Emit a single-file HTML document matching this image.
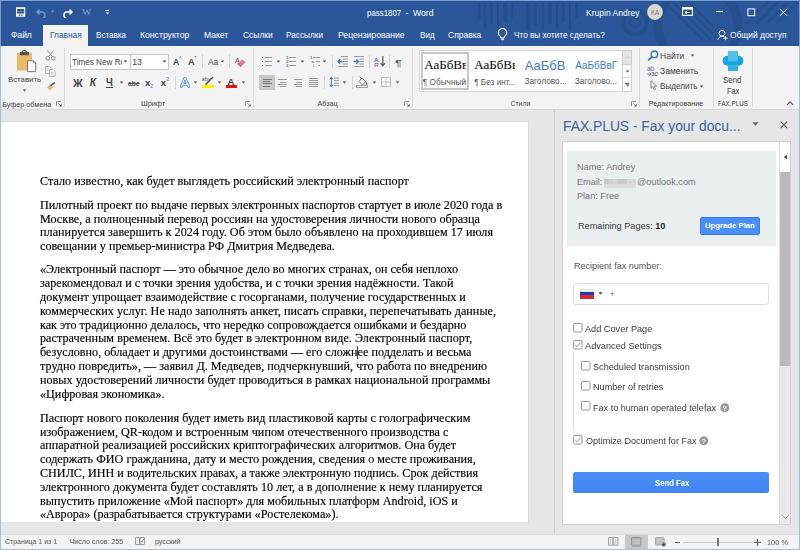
<!DOCTYPE html><html><head><meta charset="utf-8"><style>
html,body{margin:0;padding:0;width:800px;height:550px;overflow:hidden;position:relative;}
.t{position:absolute;white-space:nowrap;line-height:1em;}
.r{position:absolute;}
</style></head><body>
<div class="r" style="left:0px;top:0px;width:800px;height:550px;background:#e6e6e6;"></div>
<div class="r" style="left:0px;top:0px;width:800px;height:46px;background:#2b579a;"></div>
<svg class="r" style="left:470px;top:0px;" width="330" height="46" viewBox="0 0 330 46">
<defs><clipPath id="tb"><rect x="0" y="0" width="330" height="46"/></clipPath></defs>
<g clip-path="url(#tb)">
<g fill="#26508d">
<rect x="8" y="0" width="3" height="20"/><rect x="14" y="0" width="2" height="28"/><rect x="20" y="0" width="3" height="24"/>
<rect x="27" y="0" width="2" height="30"/><rect x="33" y="0" width="4" height="22"/><rect x="41" y="0" width="2" height="18"/>
<rect x="56" y="0" width="4" height="30"/><rect x="64" y="0" width="3" height="26"/><rect x="72" y="0" width="2" height="30"/>
<rect x="78" y="0" width="4" height="24"/><rect x="86" y="0" width="2" height="28"/><rect x="92" y="0" width="3" height="22"/>
<rect x="99" y="0" width="2" height="30"/><rect x="105" y="0" width="3" height="18"/>
</g>
<g fill="none" stroke="#26508d">
<circle cx="165" cy="22.5" r="4.8" stroke-width="2.6"/><circle cx="165" cy="22.5" r="11.8" stroke-width="4.4"/>
<circle cx="228" cy="26" r="40" stroke-width="9"/>
<path d="M193 0 L233 40 M201 0 L241 40 M209 0 L249 40 M217 0 L254 37" stroke-width="2.2"/>
<path d="M276 24 L300 0 M286 24 L310 0 M296 24 L320 0 M306 24 L330 0" stroke-width="3"/>
</g></g></svg>
<div class="r" style="left:0px;top:0px;width:800px;height:1px;background:#7f9ecb;"></div>
<div class="r" style="left:0px;top:0px;width:1px;height:46px;background:#7f9ecb;"></div>
<div class="r" style="left:799px;top:0px;width:1px;height:46px;background:#7f9ecb;"></div>
<div class="r" style="left:1px;top:1px;width:798px;height:1px;background:#25509a;"></div>
<div class="r" style="left:0px;top:46px;width:1px;height:504px;background:#a9bdd9;"></div>
<div class="r" style="left:799px;top:46px;width:1px;height:504px;background:#a9bdd9;"></div>
<div class="r" style="left:0px;top:549px;width:800px;height:1px;background:#a9bdd9;"></div>
<svg class="r" style="left:15px;top:7px;" width="11" height="11" viewBox="0 0 11 11"><rect x="1" y="0.25" width="9.25" height="9.5" fill="#fff"/><rect x="2.1" y="2" width="7.05" height="4.6" fill="#2b579a"/><rect x="2.1" y="4.1" width="7.05" height="0.6" fill="#8aa6d0"/><rect x="3.8" y="7.5" width="1.4" height="1.4" fill="#2b579a"/><rect x="6.2" y="7.5" width="1.4" height="1.4" fill="#2b579a"/></svg>
<svg class="r" style="left:36px;top:8px;" width="12" height="10" viewBox="0 0 12 10"><path d="M3.5 1.5 L1 4 L3.5 6.5" fill="none" stroke="#7f9cc8" stroke-width="1.3"/><path d="M1.5 4 H7 A3.2 3.2 0 0 1 7 10" fill="none" stroke="#7f9cc8" stroke-width="1.3"/></svg>
<svg class="r" style="left:50.0px;top:9.5px;" width="5" height="3" viewBox="0 0 5 3"><path d="M0.6 0.4 L4.4 0.4 L2.5 2.5 Z" fill="#7f9cc8"/></svg>
<svg class="r" style="left:61px;top:8px;" width="12" height="10" viewBox="0 0 12 10"><path d="M8.5 1.5 L11 4 L8.5 6.5" fill="none" stroke="#fff" stroke-width="1.5"/><path d="M10.5 4 H5 A3.2 3.2 0 0 0 5 10" fill="none" stroke="#fff" stroke-width="1.5"/></svg>
<div class="t" style="left:82.30px;top:8.06px;font-size:9.0px;color:#8ea8d0;font-weight:normal;font-family:'Liberation Serif', serif;transform:scaleX(1.1294);transform-origin:0 0;">W</div>
<div class="r" style="left:105px;top:10px;width:4px;height:1px;background:#fff;"></div>
<svg class="r" style="left:104.5px;top:11.5px;" width="5" height="3" viewBox="0 0 5 3"><path d="M0.6 0.4 L4.4 0.4 L2.5 2.6 Z" fill="#fff"/></svg>
<div class="t" style="left:366.60px;top:8.63px;font-size:9.3px;color:#ffffff;font-weight:normal;font-family:'Liberation Sans', sans-serif;transform:scaleX(0.8480);transform-origin:0 0;">pass1807</div>
<div class="t" style="left:405.60px;top:8.63px;font-size:9.3px;color:#ffffff;font-weight:normal;font-family:'Liberation Sans', sans-serif;">-</div>
<div class="t" style="left:412.60px;top:8.63px;font-size:9.3px;color:#ffffff;font-weight:normal;font-family:'Liberation Sans', sans-serif;transform:scaleX(0.9344);transform-origin:0 0;">Word</div>
<div class="t" style="left:586.20px;top:8.68px;font-size:9.0px;color:#ffffff;font-weight:normal;font-family:'Liberation Sans', sans-serif;transform:scaleX(0.9461);transform-origin:0 0;">Krupin Andrey</div>
<svg class="r" style="left:646px;top:2px;" width="18" height="19" viewBox="0 0 18 19"><circle cx="9" cy="10" r="7.9" fill="#dad6d2"/></svg>
<div class="t" style="left:650.80px;top:9.68px;font-size:6.4px;color:#7d746e;font-weight:normal;font-family:'Liberation Sans', sans-serif;transform:scaleX(0.9612);transform-origin:0 0;">KA</div>
<svg class="r" style="left:682px;top:7px;" width="11" height="9" viewBox="0 0 11 9"><rect x="0.6" y="0.6" width="9.8" height="7.8" fill="none" stroke="#fff" stroke-width="1.1"/><rect x="0.6" y="0.6" width="9.8" height="2" fill="#fff"/><path d="M3 5.5 H7.5 M5 4 L3 5.5 L5 7" fill="none" stroke="#fff" stroke-width="1"/></svg>
<div class="r" style="left:715.6px;top:11px;width:7.5px;height:1px;background:#fff;"></div>
<svg class="r" style="left:747px;top:7.5px;" width="9" height="9" viewBox="0 0 9 9"><rect x="0.9" y="0.9" width="6.8" height="6.8" fill="none" stroke="#fff" stroke-width="1"/></svg>
<svg class="r" style="left:779px;top:7.5px;" width="9" height="9" viewBox="0 0 9 9"><path d="M1 0.8 L8 7.8 M8 0.8 L1 7.8" stroke="#fff" stroke-width="1"/></svg>
<div class="r" style="left:43px;top:25px;width:45px;height:21px;background:#f3f3f3;"></div>
<div class="t" style="left:10.85px;top:31.35px;font-size:8.8px;color:#fff;font-weight:normal;font-family:'Liberation Sans', sans-serif;transform:scaleX(0.9612);transform-origin:0 0;">Файл</div>
<div class="t" style="left:49.60px;top:31.35px;font-size:8.8px;color:#2b579a;font-weight:normal;font-family:'Liberation Sans', sans-serif;transform:scaleX(0.9467);transform-origin:0 0;">Главная</div>
<div class="t" style="left:95.85px;top:31.35px;font-size:8.8px;color:#fff;font-weight:normal;font-family:'Liberation Sans', sans-serif;transform:scaleX(0.9189);transform-origin:0 0;">Вставка</div>
<div class="t" style="left:140.35px;top:31.35px;font-size:8.8px;color:#fff;font-weight:normal;font-family:'Liberation Sans', sans-serif;transform:scaleX(0.9826);transform-origin:0 0;">Конструктор</div>
<div class="t" style="left:204.10px;top:31.35px;font-size:8.8px;color:#fff;font-weight:normal;font-family:'Liberation Sans', sans-serif;transform:scaleX(0.9757);transform-origin:0 0;">Макет</div>
<div class="t" style="left:242.60px;top:31.35px;font-size:8.8px;color:#fff;font-weight:normal;font-family:'Liberation Sans', sans-serif;transform:scaleX(0.9618);transform-origin:0 0;">Ссылки</div>
<div class="t" style="left:286.35px;top:31.35px;font-size:8.8px;color:#fff;font-weight:normal;font-family:'Liberation Sans', sans-serif;transform:scaleX(0.9383);transform-origin:0 0;">Рассылки</div>
<div class="t" style="left:338.10px;top:31.35px;font-size:8.8px;color:#fff;font-weight:normal;font-family:'Liberation Sans', sans-serif;transform:scaleX(0.9803);transform-origin:0 0;">Рецензирование</div>
<div class="t" style="left:419.70px;top:31.35px;font-size:8.8px;color:#fff;font-weight:normal;font-family:'Liberation Sans', sans-serif;transform:scaleX(0.9170);transform-origin:0 0;">Вид</div>
<div class="t" style="left:448.35px;top:31.35px;font-size:8.8px;color:#fff;font-weight:normal;font-family:'Liberation Sans', sans-serif;transform:scaleX(0.9648);transform-origin:0 0;">Справка</div>
<div class="t" style="left:514.10px;top:31.35px;font-size:8.8px;color:#fff;font-weight:normal;font-family:'Liberation Sans', sans-serif;transform:scaleX(0.9337);transform-origin:0 0;">Что вы хотите сделать?</div>
<div class="t" style="left:729.60px;top:31.35px;font-size:8.8px;color:#fff;font-weight:normal;font-family:'Liberation Sans', sans-serif;transform:scaleX(0.9567);transform-origin:0 0;">Общий доступ</div>
<svg class="r" style="left:497px;top:28px;" width="11" height="14" viewBox="0 0 11 14"><path d="M3.1 8.1 A4.2 4.2 0 1 1 7.9 8.1 L6.9 10 H4.1 Z" fill="none" stroke="#fff" stroke-width="1.1" stroke-linejoin="round"/><path d="M4.2 10.6 H6.8 V11.6 L5.5 12.6 L4.2 11.6 Z" fill="#fff"/></svg>
<svg class="r" style="left:717px;top:29px;" width="13" height="13" viewBox="0 0 13 13"><circle cx="5" cy="4.2" r="2.9" fill="none" stroke="#fff" stroke-width="1"/><path d="M0.8 10.8 A4.6 4.6 0 0 1 7.2 7.6" fill="none" stroke="#fff" stroke-width="1"/><path d="M8.5 7 V11.2 M6.4 9.1 H10.6" stroke="#fff" stroke-width="1"/></svg>
<div class="r" style="left:0px;top:46px;width:800px;height:63px;background:#f3f3f3;"></div>
<div class="r" style="left:0px;top:109px;width:800px;height:1px;background:#d6d6d6;"></div>
<div class="r" style="left:0px;top:46px;width:1px;height:63px;background:#a9bdd9;"></div>
<div class="r" style="left:799px;top:46px;width:1px;height:63px;background:#a9bdd9;"></div>
<div class="r" style="left:64px;top:48px;width:1px;height:59px;background:#dadada;"></div>
<div class="r" style="left:253px;top:48px;width:1px;height:59px;background:#dadada;"></div>
<div class="r" style="left:412px;top:48px;width:1px;height:59px;background:#dadada;"></div>
<div class="r" style="left:639px;top:48px;width:1px;height:59px;background:#dadada;"></div>
<div class="r" style="left:713px;top:48px;width:1px;height:59px;background:#dadada;"></div>
<div class="r" style="left:752px;top:48px;width:1px;height:59px;background:#dadada;"></div>
<div class="t" style="left:2.30px;top:100.51px;font-size:7.2px;color:#444;font-weight:normal;font-family:'Liberation Sans', sans-serif;">Буфер обмена</div>
<div class="t" style="left:141.00px;top:100.42px;font-size:7.3px;color:#444;font-weight:normal;font-family:'Liberation Sans', sans-serif;">Шрифт</div>
<div class="t" style="left:317.60px;top:100.56px;font-size:7.13px;color:#444;font-weight:normal;font-family:'Liberation Sans', sans-serif;">Абзац</div>
<div class="t" style="left:510.60px;top:100.84px;font-size:6.8px;color:#444;font-weight:normal;font-family:'Liberation Sans', sans-serif;">Стили</div>
<div class="t" style="left:648.70px;top:100.53px;font-size:7.17px;color:#444;font-weight:normal;font-family:'Liberation Sans', sans-serif;">Редактирование</div>
<div class="t" style="left:717.60px;top:100.34px;font-size:7.4px;color:#444;font-weight:normal;font-family:'Liberation Sans', sans-serif;transform:scaleX(0.8435);transform-origin:0 0;">FAX.PLUS</div>
<svg class="r" style="left:55.7px;top:101px;" width="6" height="5.5" viewBox="0 0 6 5.5"><path d="M0.5 5 V0.5 H5" fill="none" stroke="#8a8a8a" stroke-width="0.9"/><path d="M2.2 2.2 L4 4" stroke="#888" stroke-width="0.7"/><path d="M5.6 2.8 V5.4 H3 Z" fill="#555"/></svg>
<svg class="r" style="left:244.8px;top:101px;" width="6" height="5.5" viewBox="0 0 6 5.5"><path d="M0.5 5 V0.5 H5" fill="none" stroke="#8a8a8a" stroke-width="0.9"/><path d="M2.2 2.2 L4 4" stroke="#888" stroke-width="0.7"/><path d="M5.6 2.8 V5.4 H3 Z" fill="#555"/></svg>
<svg class="r" style="left:403.9px;top:101px;" width="6" height="5.5" viewBox="0 0 6 5.5"><path d="M0.5 5 V0.5 H5" fill="none" stroke="#8a8a8a" stroke-width="0.9"/><path d="M2.2 2.2 L4 4" stroke="#888" stroke-width="0.7"/><path d="M5.6 2.8 V5.4 H3 Z" fill="#555"/></svg>
<svg class="r" style="left:631px;top:101px;" width="6" height="5.5" viewBox="0 0 6 5.5"><path d="M0.5 5 V0.5 H5" fill="none" stroke="#8a8a8a" stroke-width="0.9"/><path d="M2.2 2.2 L4 4" stroke="#888" stroke-width="0.7"/><path d="M5.6 2.8 V5.4 H3 Z" fill="#555"/></svg>
<svg class="r" style="left:786px;top:100px;" width="8" height="6" viewBox="0 0 8 6"><path d="M1 4.8 L4 1.8 L7 4.8" fill="none" stroke="#555" stroke-width="1.1"/></svg>
<svg class="r" style="left:16px;top:50px;" width="21" height="23" viewBox="0 0 21 23"><rect x="1" y="3" width="15" height="17.5" fill="#eab96a"/>
<rect x="3.8" y="1.8" width="9.2" height="3.5" rx="1" fill="#555"/><rect x="6.5" y="0.5" width="3.8" height="2.5" rx="1" fill="none" stroke="#555" stroke-width="1"/>
<path d="M11.5 10.8 H17.5 L19.7 13 V21.6 H11.5 Z" fill="#fff" stroke="#777" stroke-width="1"/><path d="M17.5 10.8 V13 H19.7" fill="none" stroke="#777" stroke-width="0.8"/></svg>
<div class="t" style="left:7.90px;top:75.95px;font-size:7.86px;color:#444;font-weight:normal;font-family:'Liberation Sans', sans-serif;">Вставить</div>
<svg class="r" style="left:21.9px;top:88.5px;" width="5" height="3" viewBox="0 0 5 3"><path d="M0.6 0.4 L4.4 0.4 L2.5 2.5 Z" fill="#555"/></svg>
<svg class="r" style="left:45px;top:50px;" width="11" height="11" viewBox="0 0 11 11"><circle cx="2.8" cy="8.2" r="1.9" fill="none" stroke="#8a8a8a" stroke-width="0.9"/><circle cx="8.2" cy="8.2" r="1.9" fill="none" stroke="#8a8a8a" stroke-width="0.9"/><path d="M3.8 6.6 L8.5 0.5 M7.2 6.6 L2.5 0.5" stroke="#8a8a8a" stroke-width="0.9"/></svg>
<svg class="r" style="left:45px;top:66px;" width="11" height="11" viewBox="0 0 11 11"><path d="M0.5 0.5 H4.5 L6 2 V7.5 H0.5 Z" fill="#f6f6f6" stroke="#aaa" stroke-width="0.9"/><path d="M4.5 3.5 H8.5 L10 5 V10.5 H4.5 Z" fill="#f6f6f6" stroke="#aaa" stroke-width="0.9"/><path d="M1.8 3 H4 M1.8 4.6 H4 M5.8 6.5 H8.5 M5.8 8 H8.5" stroke="#bbb" stroke-width="0.6"/></svg>
<svg class="r" style="left:46px;top:82px;" width="10" height="9" viewBox="0 0 10 9"><path d="M0.8 5.5 L4 2.5 L7 5.5 L4 8.6 Z" fill="#eab96a"/><path d="M4.5 3.8 L8.8 0.6" stroke="#555" stroke-width="1.6"/></svg>
<div class="r" style="left:70px;top:53.5px;width:61px;height:16px;background:#fff;box-sizing:border-box;border:1px solid #c6c6c6;"></div>
<div class="r" style="left:130px;top:53.5px;width:39px;height:16px;background:#fff;box-sizing:border-box;border:1px solid #c6c6c6;"></div>
<div class="t" style="left:72.30px;top:58.25px;font-size:8.8px;color:#444;font-weight:normal;font-family:'Liberation Sans', sans-serif;transform:scaleX(0.9252);transform-origin:0 0;"><span style="display:inline-block;width:53.5px;overflow:hidden;vertical-align:top">Times New Roman</span></div>
<svg class="r" style="left:123.1px;top:60.3px;" width="5" height="3" viewBox="0 0 5 3"><path d="M0.6 0.4 L4.4 0.4 L2.5 2.5 Z" fill="#444"/></svg>
<div class="t" style="left:132.20px;top:58.25px;font-size:8.8px;color:#444;font-weight:normal;font-family:'Liberation Sans', sans-serif;">13</div>
<svg class="r" style="left:161.5px;top:60.3px;" width="5" height="3" viewBox="0 0 5 3"><path d="M0.6 0.4 L4.4 0.4 L2.5 2.5 Z" fill="#444"/></svg>
<div class="t" style="left:173.30px;top:57.82px;font-size:8.6px;color:#4a4a4a;font-weight:bold;font-family:'Liberation Sans', sans-serif;transform:scaleX(1.0131);transform-origin:0 0;">A</div>
<svg class="r" style="left:178.6px;top:55.6px;" width="3" height="2" viewBox="0 0 3 2"><path d="M0.2 1.8 L1.5 0.2 L2.8 1.8 Z" fill="#3a78c9"/></svg>
<div class="t" style="left:188.20px;top:58.15px;font-size:8.8px;color:#4a4a4a;font-weight:bold;font-family:'Liberation Sans', sans-serif;transform:scaleX(1.0221);transform-origin:0 0;">A</div>
<svg class="r" style="left:193.7px;top:55.8px;" width="3" height="2" viewBox="0 0 3 2"><path d="M0.2 0.2 L1.5 1.8 L2.8 0.2 Z" fill="#3a78c9"/></svg>
<div class="r" style="left:202px;top:54px;width:1px;height:14px;background:#d5d5d5;"></div>
<div class="t" style="left:207.80px;top:57.72px;font-size:8.6px;color:#4a4a4a;font-weight:normal;font-family:'Liberation Sans', sans-serif;transform:scaleX(0.9700);transform-origin:0 0;">Aa</div>
<svg class="r" style="left:219.5px;top:60.0px;" width="5" height="3" viewBox="0 0 5 3"><path d="M0.6 0.4 L4.4 0.4 L2.5 2.5 Z" fill="#555"/></svg>
<div class="r" style="left:229px;top:54px;width:1px;height:14px;background:#d5d5d5;"></div>
<div class="t" style="left:235.30px;top:56.71px;font-size:7.2px;color:#4a4a4a;font-weight:normal;font-family:'Liberation Sans', sans-serif;transform:scaleX(1.0007);transform-origin:0 0;">A</div>
<svg class="r" style="left:236px;top:58px;" width="11" height="9" viewBox="0 0 11 9"><path d="M1.2 6 L6.2 1.2 L9.6 4.4 L4.6 8.8 Z" fill="#e27f90"/><path d="M1.2 6 L2.4 4.9 L5.8 8 L4.6 8.8 Z" fill="#d45f74"/></svg>
<div class="t" style="left:73.20px;top:77.83px;font-size:10.6px;color:#444;font-weight:bold;font-family:'Liberation Sans', sans-serif;transform:scaleX(1.0023);transform-origin:0 0;">Ж</div>
<div class="t" style="left:89.80px;top:78.00px;font-size:10.4px;color:#444;font-weight:bold;font-family:'Liberation Sans', sans-serif;font-style:italic;">К</div>
<div class="t" style="left:105.60px;top:77.93px;font-size:10.0px;color:#444;font-weight:bold;font-family:'Liberation Sans', sans-serif;transform:scaleX(0.9671);transform-origin:0 0;">Ч</div>
<div class="r" style="left:106px;top:86.6px;width:6.5px;height:1px;background:#444;"></div>
<svg class="r" style="left:118.5px;top:80.5px;" width="5" height="3" viewBox="0 0 5 3"><path d="M0.6 0.4 L4.4 0.4 L2.5 2.5 Z" fill="#555"/></svg>
<div class="t" style="left:127.50px;top:79.51px;font-size:7.9px;color:#555;font-weight:bold;font-family:'Liberation Sans', sans-serif;transform:scaleX(0.8524);transform-origin:0 0;"><s>abc</s></div>
<div class="t" style="left:145.00px;top:78.30px;font-size:9.8px;color:#444;font-weight:bold;font-family:'Liberation Sans', sans-serif;">x</div>
<div class="t" style="left:150.30px;top:84.00px;font-size:5.2px;color:#3a78c9;font-weight:normal;font-family:'Liberation Sans', sans-serif;">2</div>
<div class="t" style="left:160.60px;top:78.30px;font-size:9.8px;color:#444;font-weight:bold;font-family:'Liberation Sans', sans-serif;">x</div>
<div class="t" style="left:166.20px;top:77.40px;font-size:5.2px;color:#3a78c9;font-weight:normal;font-family:'Liberation Sans', sans-serif;">2</div>
<div class="r" style="left:174.5px;top:76px;width:1px;height:13px;background:#d5d5d5;"></div>
<svg class="r" style="left:180px;top:76.5px;" width="11" height="11" viewBox="0 0 11 11"><path d="M3.8 0.8 H6.2 L9.9 10.2 H7.6 L6.9 8.2 H3.1 L2.4 10.2 H0.1 Z M3.7 6.4 H6.3 L5 2.8 Z" fill="#fff" fill-rule="evenodd" stroke="#4a86cf" stroke-width="0.9" stroke-linejoin="round"/></svg>
<svg class="r" style="left:192.5px;top:80.5px;" width="5" height="3" viewBox="0 0 5 3"><path d="M0.6 0.4 L4.4 0.4 L2.5 2.5 Z" fill="#555"/></svg>
<div class="t" style="left:201.80px;top:76.64px;font-size:5.5px;color:#555;font-weight:normal;font-family:'Liberation Sans', sans-serif;">aby</div>
<svg class="r" style="left:203px;top:76px;" width="11" height="9" viewBox="0 0 11 9"><path d="M2.5 8.5 L10 1" stroke="#555" stroke-width="1.6"/></svg>
<div class="r" style="left:202px;top:85px;width:11.5px;height:2.8px;background:#ffef00;"></div>
<svg class="r" style="left:217.0px;top:80.5px;" width="5" height="3" viewBox="0 0 5 3"><path d="M0.6 0.4 L4.4 0.4 L2.5 2.5 Z" fill="#555"/></svg>
<div class="t" style="left:227.60px;top:76.84px;font-size:9.4px;color:#444;font-weight:bold;font-family:'Liberation Sans', sans-serif;">A</div>
<div class="r" style="left:226px;top:85px;width:11.3px;height:2.8px;background:#e81010;"></div>
<svg class="r" style="left:240.7px;top:80.5px;" width="5" height="3" viewBox="0 0 5 3"><path d="M0.6 0.4 L4.4 0.4 L2.5 2.5 Z" fill="#555"/></svg>
<div class="r" style="left:262px;top:56.8px;width:1.2px;height:1.2px;background:#3a78c9;"></div>
<div class="r" style="left:264.8px;top:56.8px;width:7.2px;height:1px;background:#9a9a9a;"></div>
<div class="r" style="left:262px;top:60.699999999999996px;width:1.2px;height:1.2px;background:#3a78c9;"></div>
<div class="r" style="left:264.8px;top:60.699999999999996px;width:7.2px;height:1px;background:#9a9a9a;"></div>
<div class="r" style="left:262px;top:64.6px;width:1.2px;height:1.2px;background:#3a78c9;"></div>
<div class="r" style="left:264.8px;top:64.6px;width:7.2px;height:1px;background:#9a9a9a;"></div>
<svg class="r" style="left:276.0px;top:60.3px;" width="5" height="3" viewBox="0 0 5 3"><path d="M0.6 0.4 L4.4 0.4 L2.5 2.5 Z" fill="#555"/></svg>
<svg class="r" style="left:285.5px;top:55px;" width="4" height="12" viewBox="0 0 4 12"><text x="0" y="3.6" font-size="4.2" font-weight="bold" fill="#3a78c9" font-family="Liberation Sans">1</text><text x="0" y="7.6" font-size="4.2" font-weight="bold" fill="#3a78c9" font-family="Liberation Sans">2</text><text x="0" y="11.5" font-size="4.2" font-weight="bold" fill="#3a78c9" font-family="Liberation Sans">3</text></svg>
<div class="r" style="left:289px;top:56.8px;width:7.2px;height:1px;background:#9a9a9a;"></div>
<div class="r" style="left:289px;top:60.699999999999996px;width:7.2px;height:1px;background:#9a9a9a;"></div>
<div class="r" style="left:289px;top:64.6px;width:7.2px;height:1px;background:#9a9a9a;"></div>
<svg class="r" style="left:300.0px;top:60.3px;" width="5" height="3" viewBox="0 0 5 3"><path d="M0.6 0.4 L4.4 0.4 L2.5 2.5 Z" fill="#555"/></svg>
<svg class="r" style="left:309.5px;top:55px;" width="5" height="12" viewBox="0 0 5 12"><text x="0" y="3.6" font-size="4.2" font-weight="bold" fill="#3a78c9" font-family="Liberation Sans">1</text><text x="1.5" y="7.6" font-size="4.2" font-weight="bold" fill="#3a78c9" font-family="Liberation Sans">a</text><text x="3" y="11.5" font-size="4.2" font-weight="bold" fill="#3a78c9" font-family="Liberation Sans">i</text></svg>
<div class="r" style="left:313.2px;top:56.8px;width:6.8px;height:1px;background:#9a9a9a;"></div>
<div class="r" style="left:316px;top:60.7px;width:4px;height:1px;background:#9a9a9a;"></div>
<div class="r" style="left:318px;top:64.6px;width:2px;height:1px;background:#9a9a9a;"></div>
<svg class="r" style="left:322.0px;top:60.3px;" width="5" height="3" viewBox="0 0 5 3"><path d="M0.6 0.4 L4.4 0.4 L2.5 2.5 Z" fill="#555"/></svg>
<div class="r" style="left:332px;top:55px;width:1px;height:13px;background:#d5d5d5;"></div>
<svg class="r" style="left:336.5px;top:56px;" width="12" height="11" viewBox="0 0 12 11"><path d="M4 0.5 H11 M6 3 H11 M6 5.5 H11 M6 8 H11 M1 10.5 H11" stroke="#999" stroke-width="1"/><path d="M1 5.5 H5.5 M3.2 3.3 L1 5.5 L3.2 7.7" fill="none" stroke="#3a78c9" stroke-width="1.3"/></svg>
<svg class="r" style="left:352.5px;top:56px;" width="12" height="11" viewBox="0 0 12 11"><path d="M1 0.5 H11 M6.5 3 H11 M6.5 5.5 H11 M6.5 8 H11 M1 10.5 H11" stroke="#999" stroke-width="1"/><path d="M0.5 5.5 H5.5 M3.3 3.3 L5.5 5.5 L3.3 7.7" fill="none" stroke="#3a78c9" stroke-width="1.3"/></svg>
<div class="r" style="left:368.5px;top:55px;width:1px;height:13px;background:#d5d5d5;"></div>
<div class="t" style="left:374.40px;top:56.72px;font-size:6.0px;color:#3a78c9;font-weight:bold;font-family:'Liberation Sans', sans-serif;transform:scaleX(1.0590);transform-origin:0 0;">A</div>
<div class="t" style="left:374.40px;top:62.32px;font-size:6.0px;color:#a66ac9;font-weight:bold;font-family:'Liberation Sans', sans-serif;transform:scaleX(1.0667);transform-origin:0 0;">Я</div>
<svg class="r" style="left:380px;top:56px;" width="6" height="11" viewBox="0 0 6 11"><path d="M2.8 0 V9.6 M0.6 7.2 L2.8 9.8 L5 7.2" fill="none" stroke="#555" stroke-width="1.2"/></svg>
<div class="r" style="left:389.4px;top:55px;width:1px;height:13px;background:#d5d5d5;"></div>
<div class="t" style="left:395.20px;top:57.67px;font-size:9.6px;color:#5a5a5a;font-weight:normal;font-family:'Liberation Sans', sans-serif;transform:scaleX(1.2800);transform-origin:0 0;">¶</div>
<div class="r" style="left:259px;top:75px;width:16px;height:15px;background:#c8c8c8;"></div>
<div class="r" style="left:263px;top:79px;width:8.5px;height:1.1px;background:#777;"></div>
<div class="r" style="left:263px;top:81.2px;width:6.5px;height:1.1px;background:#777;"></div>
<div class="r" style="left:263px;top:83.4px;width:8.5px;height:1.1px;background:#777;"></div>
<div class="r" style="left:263px;top:85.6px;width:6.5px;height:1.1px;background:#777;"></div>
<div class="r" style="left:278px;top:79.2px;width:9px;height:1px;background:#999;"></div>
<div class="r" style="left:279.5px;top:81.5px;width:6px;height:1px;background:#999;"></div>
<div class="r" style="left:278px;top:83.6px;width:9px;height:1px;background:#999;"></div>
<div class="r" style="left:279.5px;top:85.6px;width:6px;height:1px;background:#999;"></div>
<div class="r" style="left:293.5px;top:79.2px;width:8.5px;height:1px;background:#999;"></div>
<div class="r" style="left:296px;top:81.5px;width:6px;height:1px;background:#999;"></div>
<div class="r" style="left:293.5px;top:83.6px;width:8.5px;height:1px;background:#999;"></div>
<div class="r" style="left:296px;top:85.6px;width:6px;height:1px;background:#999;"></div>
<div class="r" style="left:309px;top:78.0px;width:9.2px;height:1px;background:#999;"></div>
<div class="r" style="left:309px;top:79.95px;width:9.2px;height:1px;background:#999;"></div>
<div class="r" style="left:309px;top:81.9px;width:9.2px;height:1px;background:#999;"></div>
<div class="r" style="left:309px;top:83.85px;width:9.2px;height:1px;background:#999;"></div>
<div class="r" style="left:309px;top:85.8px;width:9.2px;height:1px;background:#999;"></div>
<div class="r" style="left:324px;top:76px;width:1px;height:13px;background:#d5d5d5;"></div>
<svg class="r" style="left:329px;top:76px;" width="11" height="12" viewBox="0 0 11 12"><path d="M2.3 0.5 L0.3 3.2 H4.3 Z M2.3 11.5 L0.3 8.8 H4.3 Z" fill="#3a78c9"/><path d="M2.3 3 V9" stroke="#3a78c9" stroke-width="1"/><path d="M5 2 H10 M5 4.6 H10 M5 7.2 H10 M5 9.8 H10" stroke="#999" stroke-width="1"/></svg>
<svg class="r" style="left:341.5px;top:80.5px;" width="5" height="3" viewBox="0 0 5 3"><path d="M0.6 0.4 L4.4 0.4 L2.5 2.5 Z" fill="#555"/></svg>
<div class="r" style="left:351.5px;top:76px;width:1px;height:13px;background:#d5d5d5;"></div>
<svg class="r" style="left:356px;top:76px;" width="12" height="12" viewBox="0 0 12 12"><path d="M3 5.5 L6 2 L9.5 5.5 L6.5 9 Z" fill="#fff" stroke="#666" stroke-width="0.9"/><path d="M5 2.5 L4 0.5" stroke="#666" stroke-width="0.9"/><path d="M9.8 5.8 Q11.2 7.5 10.2 9" fill="none" stroke="#3a78c9" stroke-width="1.2"/><rect x="0.5" y="9.5" width="11" height="2" fill="#fff" stroke="#888" stroke-width="0.8"/></svg>
<svg class="r" style="left:371.5px;top:80.5px;" width="5" height="3" viewBox="0 0 5 3"><path d="M0.6 0.4 L4.4 0.4 L2.5 2.5 Z" fill="#555"/></svg>
<svg class="r" style="left:381px;top:77px;" width="10" height="10" viewBox="0 0 10 10"><rect x="0.5" y="0.5" width="9" height="9" fill="#fff" stroke="#bbb" stroke-width="1"/><path d="M5 0.5 V9.5 M0.5 5 H9.5" stroke="#bbb" stroke-width="1"/></svg>
<svg class="r" style="left:395.0px;top:80.5px;" width="5" height="3" viewBox="0 0 5 3"><path d="M0.6 0.4 L4.4 0.4 L2.5 2.5 Z" fill="#555"/></svg>
<div class="r" style="left:419px;top:50px;width:213px;height:42px;background:#fff;box-sizing:border-box;border:1px solid #d6d6d6;"></div>
<div class="r" style="left:420.7px;top:51.5px;width:48.6px;height:38px;background:transparent;box-sizing:border-box;border:2px solid #c6c6c6;"></div>
<div class="t" style="left:424.30px;top:57.91px;font-size:13px;color:#111;font-weight:normal;font-family:'Liberation Serif', serif;-webkit-text-stroke:0.1px #111;"><span style="display:inline-block;width:41.5px;overflow:hidden;vertical-align:top">АаБбВв</span></div>
<div class="t" style="left:422.80px;top:78.52px;font-size:8.25px;color:#555;font-weight:normal;font-family:'Liberation Sans', sans-serif;">¶ Обычный</div>
<div class="t" style="left:474.20px;top:57.91px;font-size:13px;color:#111;font-weight:normal;font-family:'Liberation Serif', serif;-webkit-text-stroke:0.1px #111;"><span style="display:inline-block;width:40.5px;overflow:hidden;vertical-align:top">АаБбВв</span></div>
<div class="t" style="left:474.20px;top:78.56px;font-size:8.2px;color:#555;font-weight:normal;font-family:'Liberation Sans', sans-serif;">¶ Без инт...</div>
<div class="t" style="left:524.70px;top:59.20px;font-size:13px;color:#3f7ac2;font-weight:normal;font-family:'Liberation Sans', sans-serif;"><span style="display:inline-block;width:41.5px;overflow:hidden;vertical-align:top">АаБбВв</span></div>
<div class="t" style="left:524.40px;top:78.09px;font-size:8.28px;color:#555;font-weight:normal;font-family:'Liberation Sans', sans-serif;">Заголово...</div>
<div class="t" style="left:575.20px;top:60.73px;font-size:10px;color:#3f7ac2;font-weight:normal;font-family:'Liberation Sans', sans-serif;"><span style="display:inline-block;width:41.5px;overflow:hidden;vertical-align:top">АаБбВвГ</span></div>
<div class="t" style="left:574.80px;top:78.09px;font-size:8.28px;color:#555;font-weight:normal;font-family:'Liberation Sans', sans-serif;">Заголово...</div>
<div class="r" style="left:622px;top:50px;width:10px;height:42px;background:#fff;box-sizing:border-box;border:1px solid #d0d0d0;"></div>
<div class="r" style="left:622px;top:50px;width:10px;height:14.5px;background:#e3e3e3;box-sizing:border-box;border:1px solid #d0d0d0;"></div>
<div class="r" style="left:622px;top:64px;width:10px;height:14px;background:#fff;box-sizing:border-box;border:1px solid #d0d0d0;"></div>
<svg class="r" style="left:624.5px;top:56px;" width="5" height="3" viewBox="0 0 5 3"><path d="M1.5 2 L2.5 1 L3.5 2" fill="none" stroke="#bbb" stroke-width="0.8"/></svg>
<svg class="r" style="left:624.5px;top:69.8px;" width="5" height="3" viewBox="0 0 5 3"><path d="M0.6 0.4 L4.4 0.4 L2.5 2.5 Z" fill="#555"/></svg>
<div class="r" style="left:625px;top:83px;width:4px;height:0.8px;background:#555;"></div>
<svg class="r" style="left:624.5px;top:84.1px;" width="5" height="3" viewBox="0 0 5 3"><path d="M0.6 0.4 L4.4 0.4 L2.5 2.5 Z" fill="#555"/></svg>
<svg class="r" style="left:647px;top:50px;" width="12" height="11" viewBox="0 0 12 11"><circle cx="7.4" cy="4.3" r="3.3" fill="none" stroke="#2f6bbd" stroke-width="1.3"/><path d="M5 6.8 L1.2 10.3" stroke="#2f6bbd" stroke-width="1.6"/></svg>
<div class="t" style="left:660.30px;top:52.49px;font-size:8.4px;color:#444;font-weight:normal;font-family:'Liberation Sans', sans-serif;transform:scaleX(1.0165);transform-origin:0 0;">Найти</div>
<svg class="r" style="left:689.5px;top:54.3px;" width="5" height="3" viewBox="0 0 5 3"><path d="M0.6 0.4 L4.4 0.4 L2.5 2.5 Z" fill="#555"/></svg>
<div class="t" style="left:647.30px;top:66.18px;font-size:6.4px;color:#555;font-weight:normal;font-family:'Liberation Sans', sans-serif;">a<span style="color:#9b5fc0">b</span></div>
<div class="t" style="left:651.20px;top:71.38px;font-size:6.4px;color:#555;font-weight:normal;font-family:'Liberation Sans', sans-serif;">ac</div>
<svg class="r" style="left:646.5px;top:71.5px;" width="5" height="4" viewBox="0 0 5 4"><path d="M0.3 2 H4 M2.5 0.5 L4 2 L2.5 3.5" fill="none" stroke="#3a78c9" stroke-width="0.9"/></svg>
<div class="t" style="left:660.00px;top:67.19px;font-size:8.4px;color:#444;font-weight:normal;font-family:'Liberation Sans', sans-serif;transform:scaleX(1.0175);transform-origin:0 0;">Заменить</div>
<svg class="r" style="left:649.5px;top:80px;" width="8" height="11" viewBox="0 0 8 11"><path d="M1 0.8 V8.3 L2.8 6.6 L4.3 9.8 L5.6 9.2 L4.1 6.1 L6.6 6 Z" fill="#fff" stroke="#666" stroke-width="0.8" stroke-linejoin="round"/></svg>
<div class="t" style="left:660.30px;top:82.15px;font-size:8.45px;color:#444;font-weight:normal;font-family:'Liberation Sans', sans-serif;transform:scaleX(0.9631);transform-origin:0 0;">Выделить</div>
<svg class="r" style="left:699.1px;top:84.5px;" width="5" height="3" viewBox="0 0 5 3"><path d="M0.6 0.4 L4.4 0.4 L2.5 2.5 Z" fill="#555"/></svg>
<svg class="r" style="left:722px;top:50px;" width="22" height="22" viewBox="0 0 22 22"><rect x="6" y="0.8" width="10" height="10.5" fill="#5bc4e4"/>
<rect x="0.6" y="5.8" width="20.8" height="10" rx="5" fill="#12a6dc"/>
<rect x="6" y="5.8" width="10" height="5.5" fill="#53bfe3"/>
<rect x="6" y="15.8" width="10" height="5.2" fill="#2cb3e2"/></svg>
<div class="t" style="left:723.40px;top:75.67px;font-size:8.3px;color:#444;font-weight:normal;font-family:'Liberation Sans', sans-serif;transform:scaleX(0.9489);transform-origin:0 0;">Send</div>
<div class="t" style="left:726.60px;top:86.87px;font-size:8.3px;color:#444;font-weight:normal;font-family:'Liberation Sans', sans-serif;transform:scaleX(0.8885);transform-origin:0 0;">Fax</div>
<div class="r" style="left:0px;top:121px;width:529px;height:1px;background:#d8d8d8;"></div>
<div class="r" style="left:528px;top:121px;width:1px;height:402px;background:#dadada;"></div>
<div class="r" style="left:0px;top:122px;width:528px;height:400px;background:#ffffff;"></div>
<div class="r" style="left:0px;top:109px;width:1px;height:441px;background:#a9bdd9;"></div>
<div class="t" style="left:40.10px;top:175.02px;font-size:12.15px;color:#000;font-weight:normal;font-family:'Liberation Serif', serif;-webkit-text-stroke:0.15px #000;letter-spacing:0.0231px;will-change:transform;">Стало известно, как будет выглядеть российский электронный паспорт</div>
<div class="t" style="left:40.10px;top:198.82px;font-size:12.15px;color:#000;font-weight:normal;font-family:'Liberation Serif', serif;-webkit-text-stroke:0.15px #000;letter-spacing:0.0228px;will-change:transform;">Пилотный проект по выдаче первых электронных паспортов стартует в июле 2020 года в</div>
<div class="t" style="left:40.10px;top:212.62px;font-size:12.15px;color:#000;font-weight:normal;font-family:'Liberation Serif', serif;-webkit-text-stroke:0.15px #000;letter-spacing:0.0000px;will-change:transform;">Москве, а полноценный перевод россиян на удостоверения личности нового образца</div>
<div class="t" style="left:40.10px;top:226.42px;font-size:12.15px;color:#000;font-weight:normal;font-family:'Liberation Serif', serif;-webkit-text-stroke:0.15px #000;letter-spacing:0.0418px;will-change:transform;">планируется завершить к 2024 году. Об этом было объявлено на проходившем 17 июля</div>
<div class="t" style="left:40.10px;top:240.22px;font-size:12.15px;color:#000;font-weight:normal;font-family:'Liberation Serif', serif;-webkit-text-stroke:0.15px #000;letter-spacing:0.0000px;will-change:transform;">совещании у премьер-министра РФ Дмитрия Медведева.</div>
<div class="t" style="left:40.10px;top:263.32px;font-size:12.15px;color:#000;font-weight:normal;font-family:'Liberation Serif', serif;-webkit-text-stroke:0.15px #000;letter-spacing:0.0088px;will-change:transform;">«Электронный паспорт — это обычное дело во многих странах, он себя неплохо</div>
<div class="t" style="left:40.10px;top:277.12px;font-size:12.15px;color:#000;font-weight:normal;font-family:'Liberation Serif', serif;-webkit-text-stroke:0.15px #000;letter-spacing:0.0320px;will-change:transform;">зарекомендовал и с точки зрения удобства, и с точки зрения надёжности. Такой</div>
<div class="t" style="left:40.10px;top:290.92px;font-size:12.15px;color:#000;font-weight:normal;font-family:'Liberation Serif', serif;-webkit-text-stroke:0.15px #000;letter-spacing:0.0122px;will-change:transform;">документ упрощает взаимодействие с госорганами, получение государственных и</div>
<div class="t" style="left:40.10px;top:304.72px;font-size:12.15px;color:#000;font-weight:normal;font-family:'Liberation Serif', serif;-webkit-text-stroke:0.15px #000;letter-spacing:0.0500px;will-change:transform;">коммерческих услуг. Не надо заполнять анкет, писать справки, перепечатывать данные,</div>
<div class="t" style="left:40.10px;top:318.52px;font-size:12.15px;color:#000;font-weight:normal;font-family:'Liberation Serif', serif;-webkit-text-stroke:0.15px #000;letter-spacing:0.0107px;will-change:transform;">как это традиционно делалось, что нередко сопровождается ошибками и бездарно</div>
<div class="t" style="left:40.10px;top:332.32px;font-size:12.15px;color:#000;font-weight:normal;font-family:'Liberation Serif', serif;-webkit-text-stroke:0.15px #000;letter-spacing:0.0382px;will-change:transform;">растраченным временем. Всё это будет в электронном виде. Электронный паспорт,</div>
<div class="t" style="left:40.10px;top:346.12px;font-size:12.15px;color:#000;font-weight:normal;font-family:'Liberation Serif', serif;-webkit-text-stroke:0.15px #000;letter-spacing:0.0171px;will-change:transform;">безусловно, обладает и другими достоинствами — его сложнее подделать и весьма</div>
<div class="t" style="left:40.10px;top:359.92px;font-size:12.15px;color:#000;font-weight:normal;font-family:'Liberation Serif', serif;-webkit-text-stroke:0.15px #000;letter-spacing:0.0167px;will-change:transform;">трудно повредить», — заявил Д. Медведев, подчеркнувший, что работа по внедрению</div>
<div class="t" style="left:40.10px;top:373.72px;font-size:12.15px;color:#000;font-weight:normal;font-family:'Liberation Serif', serif;-webkit-text-stroke:0.15px #000;letter-spacing:0.0214px;will-change:transform;">новых удостоверений личности будет проводиться в рамках национальной программы</div>
<div class="t" style="left:40.10px;top:387.52px;font-size:12.15px;color:#000;font-weight:normal;font-family:'Liberation Serif', serif;-webkit-text-stroke:0.15px #000;letter-spacing:0.0150px;will-change:transform;">«Цифровая экономика».</div>
<div class="t" style="left:40.10px;top:411.82px;font-size:12.15px;color:#000;font-weight:normal;font-family:'Liberation Serif', serif;-webkit-text-stroke:0.15px #000;letter-spacing:0.0387px;will-change:transform;">Паспорт нового поколения будет иметь вид пластиковой карты с голографическим</div>
<div class="t" style="left:40.10px;top:425.62px;font-size:12.15px;color:#000;font-weight:normal;font-family:'Liberation Serif', serif;-webkit-text-stroke:0.15px #000;letter-spacing:0.0229px;will-change:transform;">изображением, QR-кодом и встроенным чипом отечественного производства с</div>
<div class="t" style="left:40.10px;top:439.42px;font-size:12.15px;color:#000;font-weight:normal;font-family:'Liberation Serif', serif;-webkit-text-stroke:0.15px #000;letter-spacing:0.0000px;will-change:transform;">аппаратной реализацией российских криптографических алгоритмов. Она будет</div>
<div class="t" style="left:40.10px;top:453.22px;font-size:12.15px;color:#000;font-weight:normal;font-family:'Liberation Serif', serif;-webkit-text-stroke:0.15px #000;letter-spacing:0.0105px;will-change:transform;">содержать ФИО гражданина, дату и место рождения, сведения о месте проживания,</div>
<div class="t" style="left:40.10px;top:467.02px;font-size:12.15px;color:#000;font-weight:normal;font-family:'Liberation Serif', serif;-webkit-text-stroke:0.15px #000;letter-spacing:0.0000px;will-change:transform;">СНИЛС, ИНН и водительских правах, а также электронную подпись. Срок действия</div>
<div class="t" style="left:40.10px;top:480.82px;font-size:12.15px;color:#000;font-weight:normal;font-family:'Liberation Serif', serif;-webkit-text-stroke:0.15px #000;letter-spacing:0.0250px;will-change:transform;">электронного документа будет составлять 10 лет, а в дополнение к нему планируется</div>
<div class="t" style="left:40.10px;top:494.62px;font-size:12.15px;color:#000;font-weight:normal;font-family:'Liberation Serif', serif;-webkit-text-stroke:0.15px #000;letter-spacing:0.0141px;will-change:transform;">выпустить приложение «Мой паспорт» для мобильных платформ Android, iOS и</div>
<div class="t" style="left:40.10px;top:508.42px;font-size:12.15px;color:#000;font-weight:normal;font-family:'Liberation Serif', serif;-webkit-text-stroke:0.15px #000;letter-spacing:0.0154px;will-change:transform;">«Аврора» (разрабатывается структурами «Ростелекома»).</div>
<div class="r" style="left:357px;top:345.5px;width:1px;height:13.5px;background:#444;"></div>
<div class="r" style="left:554px;top:110px;width:1px;height:424px;background:#d0d0d0;"></div>
<div class="t" style="left:562.90px;top:119.76px;font-size:13.75px;color:#3a62a0;font-weight:normal;font-family:'Liberation Sans', sans-serif;transform:scaleX(1.0055);transform-origin:0 0;">FAX.PLUS - Fax your docu...</div>
<svg class="r" style="left:751.5px;top:122px;" width="7" height="4" viewBox="0 0 7 4"><path d="M0.3 0.3 H6.7 L3.5 3.8 Z" fill="#666"/></svg>
<svg class="r" style="left:780px;top:121px;" width="8" height="8" viewBox="0 0 8 8"><path d="M0.6 0.6 L7.2 7.2 M7.2 0.6 L0.6 7.2" stroke="#555" stroke-width="1.1"/></svg>
<div class="r" style="left:562px;top:141px;width:229px;height:384px;background:#ffffff;box-sizing:border-box;border:1px solid #cfcfcf;"></div>
<div class="r" style="left:779px;top:142px;width:11px;height:382px;background:#e8e8e8;box-sizing:border-box;border-left:1px solid #dcdcdc;"></div>
<div class="r" style="left:780px;top:142px;width:10px;height:30px;background:#ffffff;"></div>
<svg class="r" style="left:783px;top:154px;" width="5" height="6" viewBox="0 0 5 6"><path d="M4 0.5 V5.5 L0.8 3 Z" fill="#555"/></svg>
<div class="r" style="left:780px;top:172px;width:10px;height:194px;background:#b9b9b9;"></div>
<svg class="r" style="left:781px;top:514px;" width="9" height="6" viewBox="0 0 9 6"><path d="M1 1 L4.5 4.5 L8 1" fill="none" stroke="#999" stroke-width="0.9"/></svg>
<div class="r" style="left:567px;top:151px;width:209px;height:95px;background:#e9eeee;"></div>
<div class="t" style="left:577.00px;top:162.30px;font-size:9.8px;color:#777;font-weight:normal;font-family:'Liberation Sans', sans-serif;transform:scaleX(0.9391);transform-origin:0 0;">Name: Andrey</div>
<div class="t" style="left:577.00px;top:176.70px;font-size:9.8px;color:#777;font-weight:normal;font-family:'Liberation Sans', sans-serif;transform:scaleX(0.9290);transform-origin:0 0;">Email:</div>
<div class="t" style="left:637.30px;top:176.70px;font-size:9.8px;color:#777;font-weight:normal;font-family:'Liberation Sans', sans-serif;transform:scaleX(0.9334);transform-origin:0 0;">@outlook.com</div>
<div class="r" style="left:604.2px;top:179px;width:4.5px;height:4.5px;background:#cacbcb;"></div>
<div class="r" style="left:608.7px;top:179px;width:4.5px;height:4.5px;background:#cfd0d0;"></div>
<div class="r" style="left:613.2px;top:179px;width:4.5px;height:4.5px;background:#d3d4d4;"></div>
<div class="r" style="left:617.7px;top:179px;width:4.5px;height:4.5px;background:#c7cad0;"></div>
<div class="r" style="left:622.2px;top:179px;width:4.5px;height:4.5px;background:#c8cbce;"></div>
<div class="r" style="left:626.7px;top:179px;width:4.5px;height:4.5px;background:#d5d6d6;"></div>
<div class="r" style="left:631.2px;top:179px;width:4.8px;height:4.5px;background:#d8d9d9;"></div>
<div class="r" style="left:604.2px;top:183.5px;width:31.8px;height:4.2px;background:#dcdede;"></div>
<div class="t" style="left:577.00px;top:190.60px;font-size:9.8px;color:#777;font-weight:normal;font-family:'Liberation Sans', sans-serif;transform:scaleX(0.9314);transform-origin:0 0;">Plan: Free</div>
<div class="t" style="left:577.70px;top:220.90px;font-size:9.8px;color:#3a3a3a;font-weight:normal;font-family:'Liberation Sans', sans-serif;transform:scaleX(0.9329);transform-origin:0 0;">Remaining Pages: <b style="color:#222">10</b></div>
<div class="r" style="left:700px;top:217px;width:60px;height:18.3px;background:#4a8ff6;box-sizing:border-box;border:1px solid #2f7cf0;border-radius:2px;"></div>
<div class="t" style="left:705.20px;top:222.41px;font-size:7.9px;color:#fff;font-weight:bold;font-family:'Liberation Sans', sans-serif;transform:scaleX(0.9789);transform-origin:0 0;">Upgrade Plan</div>
<div class="t" style="left:573.80px;top:261.30px;font-size:9.8px;color:#555;font-weight:normal;font-family:'Liberation Sans', sans-serif;transform:scaleX(0.9213);transform-origin:0 0;">Recipient fax number:</div>
<div class="r" style="left:573px;top:283px;width:196px;height:22px;background:#fff;box-sizing:border-box;border:1px solid #d9dde0;border-radius:3px;"></div>
<div class="r" style="left:579.6px;top:289px;width:14.2px;height:2.7px;background:#fff;box-sizing:border-box;border:0.5px solid #ddd;"></div>
<div class="r" style="left:579.6px;top:291.6px;width:14.2px;height:3.7px;background:#1c3fae;"></div>
<div class="r" style="left:579.6px;top:295.3px;width:14.2px;height:3.3px;background:#e0252a;"></div>
<svg class="r" style="left:598px;top:292px;" width="5" height="3" viewBox="0 0 5 3"><path d="M0.3 0.3 H4.7 L2.5 2.7 Z" fill="#555"/></svg>
<div class="t" style="left:609.60px;top:290.38px;font-size:9px;color:#777;font-weight:normal;font-family:'Liberation Sans', sans-serif;">+</div>
<svg class="r" style="left:573px;top:322.5px;" width="10" height="10" viewBox="0 0 10 10"><rect x="0.5" y="0.5" width="8.5" height="8.5" rx="1.2" fill="#fff" stroke="#959595" stroke-width="1"/></svg>
<div class="t" style="left:584.90px;top:323.60px;font-size:9.8px;color:#3a3a3a;font-weight:normal;font-family:'Liberation Sans', sans-serif;transform:scaleX(0.9361);transform-origin:0 0;">Add Cover Page</div>
<svg class="r" style="left:573px;top:340px;" width="10" height="10" viewBox="0 0 10 10"><rect x="0.5" y="0.5" width="8.5" height="8.5" rx="1.2" fill="#fff" stroke="#959595" stroke-width="1"/><path d="M2 4.8 L4 6.8 L7.6 2.5" fill="none" stroke="#8a7f99" stroke-width="0.9"/></svg>
<div class="t" style="left:584.90px;top:340.60px;font-size:9.8px;color:#3a3a3a;font-weight:normal;font-family:'Liberation Sans', sans-serif;transform:scaleX(0.9375);transform-origin:0 0;">Advanced Settings</div>
<div class="r" style="left:573px;top:352px;width:1px;height:79px;background:#dcdcdc;"></div>
<svg class="r" style="left:581px;top:360.5px;" width="10" height="10" viewBox="0 0 10 10"><rect x="0.5" y="0.5" width="8.5" height="8.5" rx="1.2" fill="#fff" stroke="#959595" stroke-width="1"/></svg>
<div class="t" style="left:592.80px;top:361.80px;font-size:9.8px;color:#3a3a3a;font-weight:normal;font-family:'Liberation Sans', sans-serif;transform:scaleX(0.9297);transform-origin:0 0;">Scheduled transmission</div>
<svg class="r" style="left:581px;top:380.8px;" width="10" height="10" viewBox="0 0 10 10"><rect x="0.5" y="0.5" width="8.5" height="8.5" rx="1.2" fill="#fff" stroke="#959595" stroke-width="1"/></svg>
<div class="t" style="left:592.80px;top:382.10px;font-size:9.8px;color:#3a3a3a;font-weight:normal;font-family:'Liberation Sans', sans-serif;transform:scaleX(0.9288);transform-origin:0 0;">Number of retries</div>
<svg class="r" style="left:581px;top:401.4px;" width="10" height="10" viewBox="0 0 10 10"><rect x="0.5" y="0.5" width="8.5" height="8.5" rx="1.2" fill="#fff" stroke="#959595" stroke-width="1"/></svg>
<div class="t" style="left:592.90px;top:402.70px;font-size:9.8px;color:#3a3a3a;font-weight:normal;font-family:'Liberation Sans', sans-serif;transform:scaleX(0.9256);transform-origin:0 0;">Fax to human operated telefax</div>
<svg class="r" style="left:719.5px;top:402.8px;" width="10" height="10" viewBox="0 0 10 10"><circle cx="4.8" cy="4.8" r="4.5" fill="#999"/><text x="4.8" y="7.6" font-size="7.2" font-weight="bold" text-anchor="middle" fill="#fff" font-family="Liberation Sans">?</text></svg>
<svg class="r" style="left:573px;top:434.5px;" width="10" height="10" viewBox="0 0 10 10"><rect x="0.5" y="0.5" width="8.5" height="8.5" rx="1.2" fill="#fff" stroke="#959595" stroke-width="1"/><path d="M2 4.8 L4 6.8 L7.6 2.5" fill="none" stroke="#8a7f99" stroke-width="0.9"/></svg>
<div class="t" style="left:585.50px;top:436.10px;font-size:9.8px;color:#3a3a3a;font-weight:normal;font-family:'Liberation Sans', sans-serif;transform:scaleX(0.9276);transform-origin:0 0;">Optimize Document for Fax</div>
<svg class="r" style="left:699.3px;top:436.2px;" width="10" height="10" viewBox="0 0 10 10"><circle cx="4.8" cy="4.8" r="4.5" fill="#999"/><text x="4.8" y="7.6" font-size="7.2" font-weight="bold" text-anchor="middle" fill="#fff" font-family="Liberation Sans">?</text></svg>
<div class="r" style="left:573px;top:472px;width:196px;height:20.5px;background:linear-gradient(#4b8ff6,#3f84f0);border-radius:2px;"></div>
<div class="t" style="left:654.90px;top:478.69px;font-size:8.4px;color:#fff;font-weight:bold;font-family:'Liberation Sans', sans-serif;transform:scaleX(0.9239);transform-origin:0 0;">Send Fax</div>
<div class="r" style="left:0px;top:534px;width:800px;height:1px;background:#d9d9d9;"></div>
<div class="r" style="left:0px;top:535px;width:800px;height:14px;background:#f3f3f3;"></div>
<div class="r" style="left:0px;top:534px;width:1px;height:16px;background:#a9bdd9;"></div>
<div class="r" style="left:799px;top:534px;width:1px;height:16px;background:#a9bdd9;"></div>
<div class="t" style="left:5.00px;top:539.43px;font-size:6.94px;color:#555;font-weight:normal;font-family:'Liberation Sans', sans-serif;">Страница 1 из 1</div>
<div class="t" style="left:69.50px;top:539.29px;font-size:7.1px;color:#555;font-weight:normal;font-family:'Liberation Sans', sans-serif;">Число слов: 255</div>
<svg class="r" style="left:135px;top:537px;" width="10" height="8" viewBox="0 0 10 8"><path d="M0.5 0.5 H4.5 V7.5 H0.5 Z M5 0.5 H9.5 V7.5 H5 Z" fill="none" stroke="#888" stroke-width="0.8"/><path d="M6 3.8 L7 5 L8.8 1.8" fill="none" stroke="#777" stroke-width="0.8"/></svg>
<div class="t" style="left:155.00px;top:539.29px;font-size:7.1px;color:#555;font-weight:normal;font-family:'Liberation Sans', sans-serif;">русский</div>
<svg class="r" style="left:608px;top:537px;" width="11" height="9" viewBox="0 0 11 9"><path d="M0.5 0.5 H4.8 V8.2 H0.5 Z M5.6 0.5 H9.9 V8.2 H5.6 Z" fill="#f6f6f6" stroke="#999" stroke-width="0.9"/><path d="M2.6 2 V6.8 M7.8 2 V6.8" stroke="#aaa" stroke-width="0.8"/></svg>
<div class="r" style="left:625px;top:535px;width:23px;height:14px;background:#c8c8c8;"></div>
<svg class="r" style="left:631px;top:537px;" width="11" height="10" viewBox="0 0 11 10"><rect x="0.5" y="0.5" width="9.5" height="8.5" rx="0.8" fill="#b4b4b4" stroke="#8c8c8c" stroke-width="0.9"/><path d="M1.5 3.4 H9 M1.5 6 H9" stroke="#d8d8d8" stroke-width="0.8"/></svg>
<svg class="r" style="left:655px;top:537px;" width="12" height="10" viewBox="0 0 12 10"><rect x="0.5" y="0.5" width="8.5" height="7.5" rx="0.8" fill="#c4c4c4" stroke="#999" stroke-width="0.8"/><circle cx="8.6" cy="7.2" r="2.5" fill="#555" stroke="#f3f3f3" stroke-width="0.7"/><path d="M7.2 6.4 Q8.6 5.6 10 7" stroke="#ddd" stroke-width="0.6" fill="none"/></svg>
<div class="r" style="left:674.5px;top:541.5px;width:5.5px;height:1px;background:#555;"></div>
<div class="r" style="left:683px;top:541.5px;width:69px;height:1px;background:#c8c8c8;"></div>
<div class="r" style="left:716.5px;top:537.5px;width:2.5px;height:8px;background:#777;"></div>
<svg class="r" style="left:753px;top:537.5px;" width="9" height="9" viewBox="0 0 9 9"><path d="M4.5 0.8 V7.8 M1 4.3 H8" stroke="#555" stroke-width="1"/></svg>
<div class="t" style="left:766.60px;top:539.00px;font-size:7.8px;color:#555;font-weight:normal;font-family:'Liberation Sans', sans-serif;transform:scaleX(0.9498);transform-origin:0 0;">100 %</div>
</body></html>
